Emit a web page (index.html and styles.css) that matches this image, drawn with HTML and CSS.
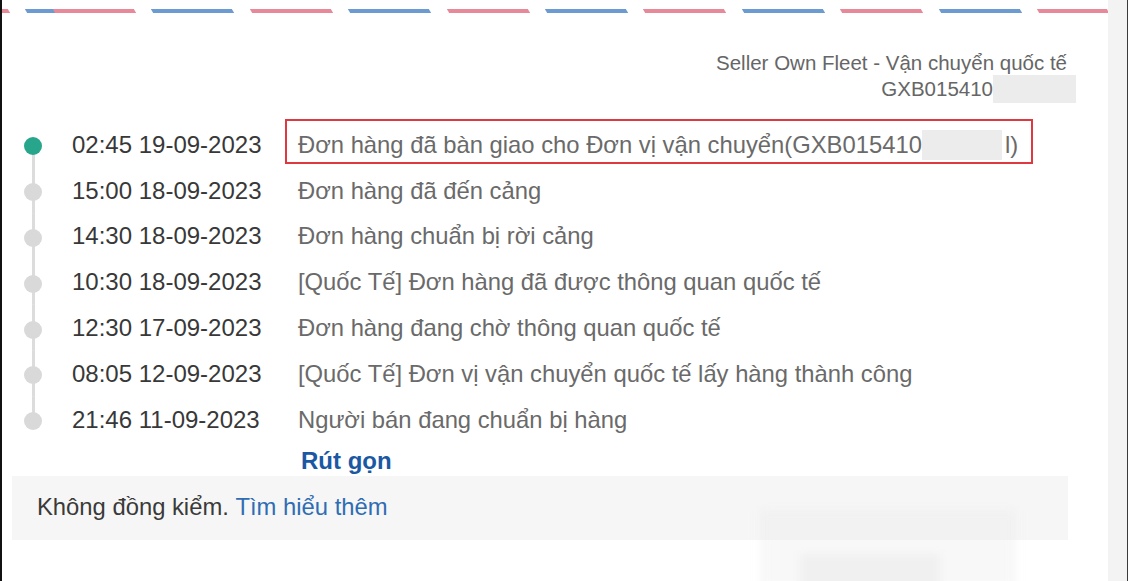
FILE: index.html
```html
<!DOCTYPE html>
<html lang="vi">
<head>
<meta charset="utf-8">
<title>Theo dõi đơn hàng</title>
<link rel="stylesheet" href="styles.css">
</head>
<body>
<div class="page">
  <main class="main">
    <div class="airmail"></div>

    <div class="carrier">
      <div class="carrier-name">Seller Own Fleet - Vận chuyển quốc tế</div>
      <div class="carrier-code">GXB015410<span class="mask mask-code"></span></div>
    </div>

    <ul class="timeline">
      <li class="step step-first">
        <span class="rail"><span class="dot dot-active"></span></span>
        <span class="time">02:45 19-09-2023</span>
        <span class="status status-hl"><span class="highlight">Đơn hàng đã bàn giao cho Đơn vị vận chuyển(GXB015410<span class="mask mask-inline"></span>l)</span></span>
      </li>
      <li class="step">
        <span class="rail"><span class="dot"></span></span>
        <span class="time">15:00 18-09-2023</span>
        <span class="status">Đơn hàng đã đến cảng</span>
      </li>
      <li class="step">
        <span class="rail"><span class="dot"></span></span>
        <span class="time">14:30 18-09-2023</span>
        <span class="status">Đơn hàng chuẩn bị rời cảng</span>
      </li>
      <li class="step">
        <span class="rail"><span class="dot"></span></span>
        <span class="time">10:30 18-09-2023</span>
        <span class="status">[Quốc Tế] Đơn hàng đã được thông quan quốc tế</span>
      </li>
      <li class="step">
        <span class="rail"><span class="dot"></span></span>
        <span class="time">12:30 17-09-2023</span>
        <span class="status">Đơn hàng đang chờ thông quan quốc tế</span>
      </li>
      <li class="step">
        <span class="rail"><span class="dot"></span></span>
        <span class="time">08:05 12-09-2023</span>
        <span class="status">[Quốc Tế] Đơn vị vận chuyển quốc tế lấy hàng thành công</span>
      </li>
      <li class="step step-last">
        <span class="rail"><span class="dot"></span></span>
        <span class="time">21:46 11-09-2023</span>
        <span class="status">Người bán đang chuẩn bị hàng</span>
      </li>
    </ul>

    <div class="collapse"><a class="collapse-link" href="#">Rút gọn</a></div>

    <div class="notice">
      <span class="notice-text">Không đồng kiểm.</span>&nbsp;<a class="notice-link" href="#">Tìm hiểu thêm</a>
    </div>

    <div class="blurred"><div class="blurred-inner"></div></div>
  </main>
  <div class="scrollbar"></div>
</div>
</body>
</html>
```

FILE: styles.css
```css
* { box-sizing: border-box; }

html, body {
  margin: 0;
  padding: 0;
  height: 100%;
  background: #ffffff;
}

body {
  font-family: "Liberation Sans", Arial, sans-serif;
  color: #333;
  overflow: hidden;
}

.page {
  display: flex;
  height: 581px;
  border-left: 2px solid #111;
}

.main {
  position: relative;
  flex: 1;
  min-width: 0;
  overflow: hidden;
}

.scrollbar {
  width: 20px;
  background: #f3f3f3;
  border-right: 1px solid #3a3a3a;
}

/* Airmail stripe */
.airmail {
  margin-top: 9px;
  height: 4px;
  margin-left: -4px;
  transform: skewX(30deg);
  background: repeating-linear-gradient(90deg,
      #e8899a 0px, #e8899a 81px,
      transparent 81px, transparent 98.4px,
      #6b9bd0 98.4px, #6b9bd0 179.4px,
      transparent 179.4px, transparent 196.8px);
  background-position: 56px 0;
}

/* Carrier info */
.carrier {
  margin-top: 38px;
  padding-right: 41px;
  text-align: right;
  font-size: 20.5px;
  line-height: 24px;
  color: #666;
}

.carrier-code {
  display: flex;
  justify-content: flex-end;
  align-items: center;
  margin-right: -9px;
}

.mask {
  display: inline-block;
  background: #ececec;
}

.mask-code {
  width: 83px;
  height: 28px;
}

/* Timeline */
.timeline {
  list-style: none;
  margin: 19px 0 0 0;
  padding: 0;
}

.step {
  display: grid;
  grid-template-columns: 62px 222px 1fr;
  grid-template-rows: 45.8px;
  height: 45.8px;
  align-items: center;
}

.rail {
  height: 100%;
  display: flex;
  align-items: center;
  justify-content: center;
  background: linear-gradient(#dcdcdc, #dcdcdc) center / 3px 100% no-repeat;
}

.step-first .rail {
  background: linear-gradient(#dcdcdc, #dcdcdc) center bottom / 3px 50% no-repeat;
}

.step-last .rail {
  background: linear-gradient(#dcdcdc, #dcdcdc) center top / 3px 50% no-repeat;
}

.dot {
  width: 18px;
  height: 18px;
  margin-top: 3px;
  border-radius: 50%;
  background: #d9d9d9;
}

.dot-active {
  background: #27a68c;
}

.time {
  padding-left: 8px;
  font-size: 24px;
  color: #383838;
  white-space: nowrap;
}

.status {
  padding-left: 12px;
  font-size: 23.8px;
  color: #6a6a6a;
  white-space: nowrap;
}

.status-hl {
  align-self: stretch;
  display: flex;
  align-items: center;
  padding-left: 0;
}

.highlight {
  display: flex;
  align-items: center;
  flex: none;
  width: 748px;
  height: 45px;
  margin-left: -1px;
  margin-bottom: 7px;
  padding-left: 11px;
  padding-top: 7px;
  border: 2.5px solid #e0383f;
}

.mask-inline {
  width: 80px;
  height: 30px;
  margin-right: 3px;
}

/* Collapse link */
.collapse {
  margin-top: 2px;
  padding-left: 299px;
  height: 31px;
  line-height: 31px;
}

.collapse-link {
  font-size: 24px;
  font-weight: bold;
  color: #1b58a3;
  text-decoration: none;
}

/* Notice */
.notice {
  display: flex;
  align-items: center;
  margin: 0 40px 0 10px;
  height: 64px;
  padding-left: 25px;
  padding-bottom: 2px;
  background: #f6f6f6;
  font-size: 23.8px;
}

.notice-text {
  color: #3a3a3a;
}

.notice-link {
  color: #2e6db3;
  text-decoration: none;
}

/* Blurred obscured region (overlay) */
.blurred {
  position: absolute;
  left: 758px;
  top: 510px;
  width: 256px;
  height: 80px;
  background: rgba(232, 232, 232, 0.3);
  filter: blur(4px);
}

.blurred-inner {
  margin: 44px 0 0 40px;
  width: 140px;
  height: 40px;
  background: rgba(225, 225, 225, 0.35);
}
```
